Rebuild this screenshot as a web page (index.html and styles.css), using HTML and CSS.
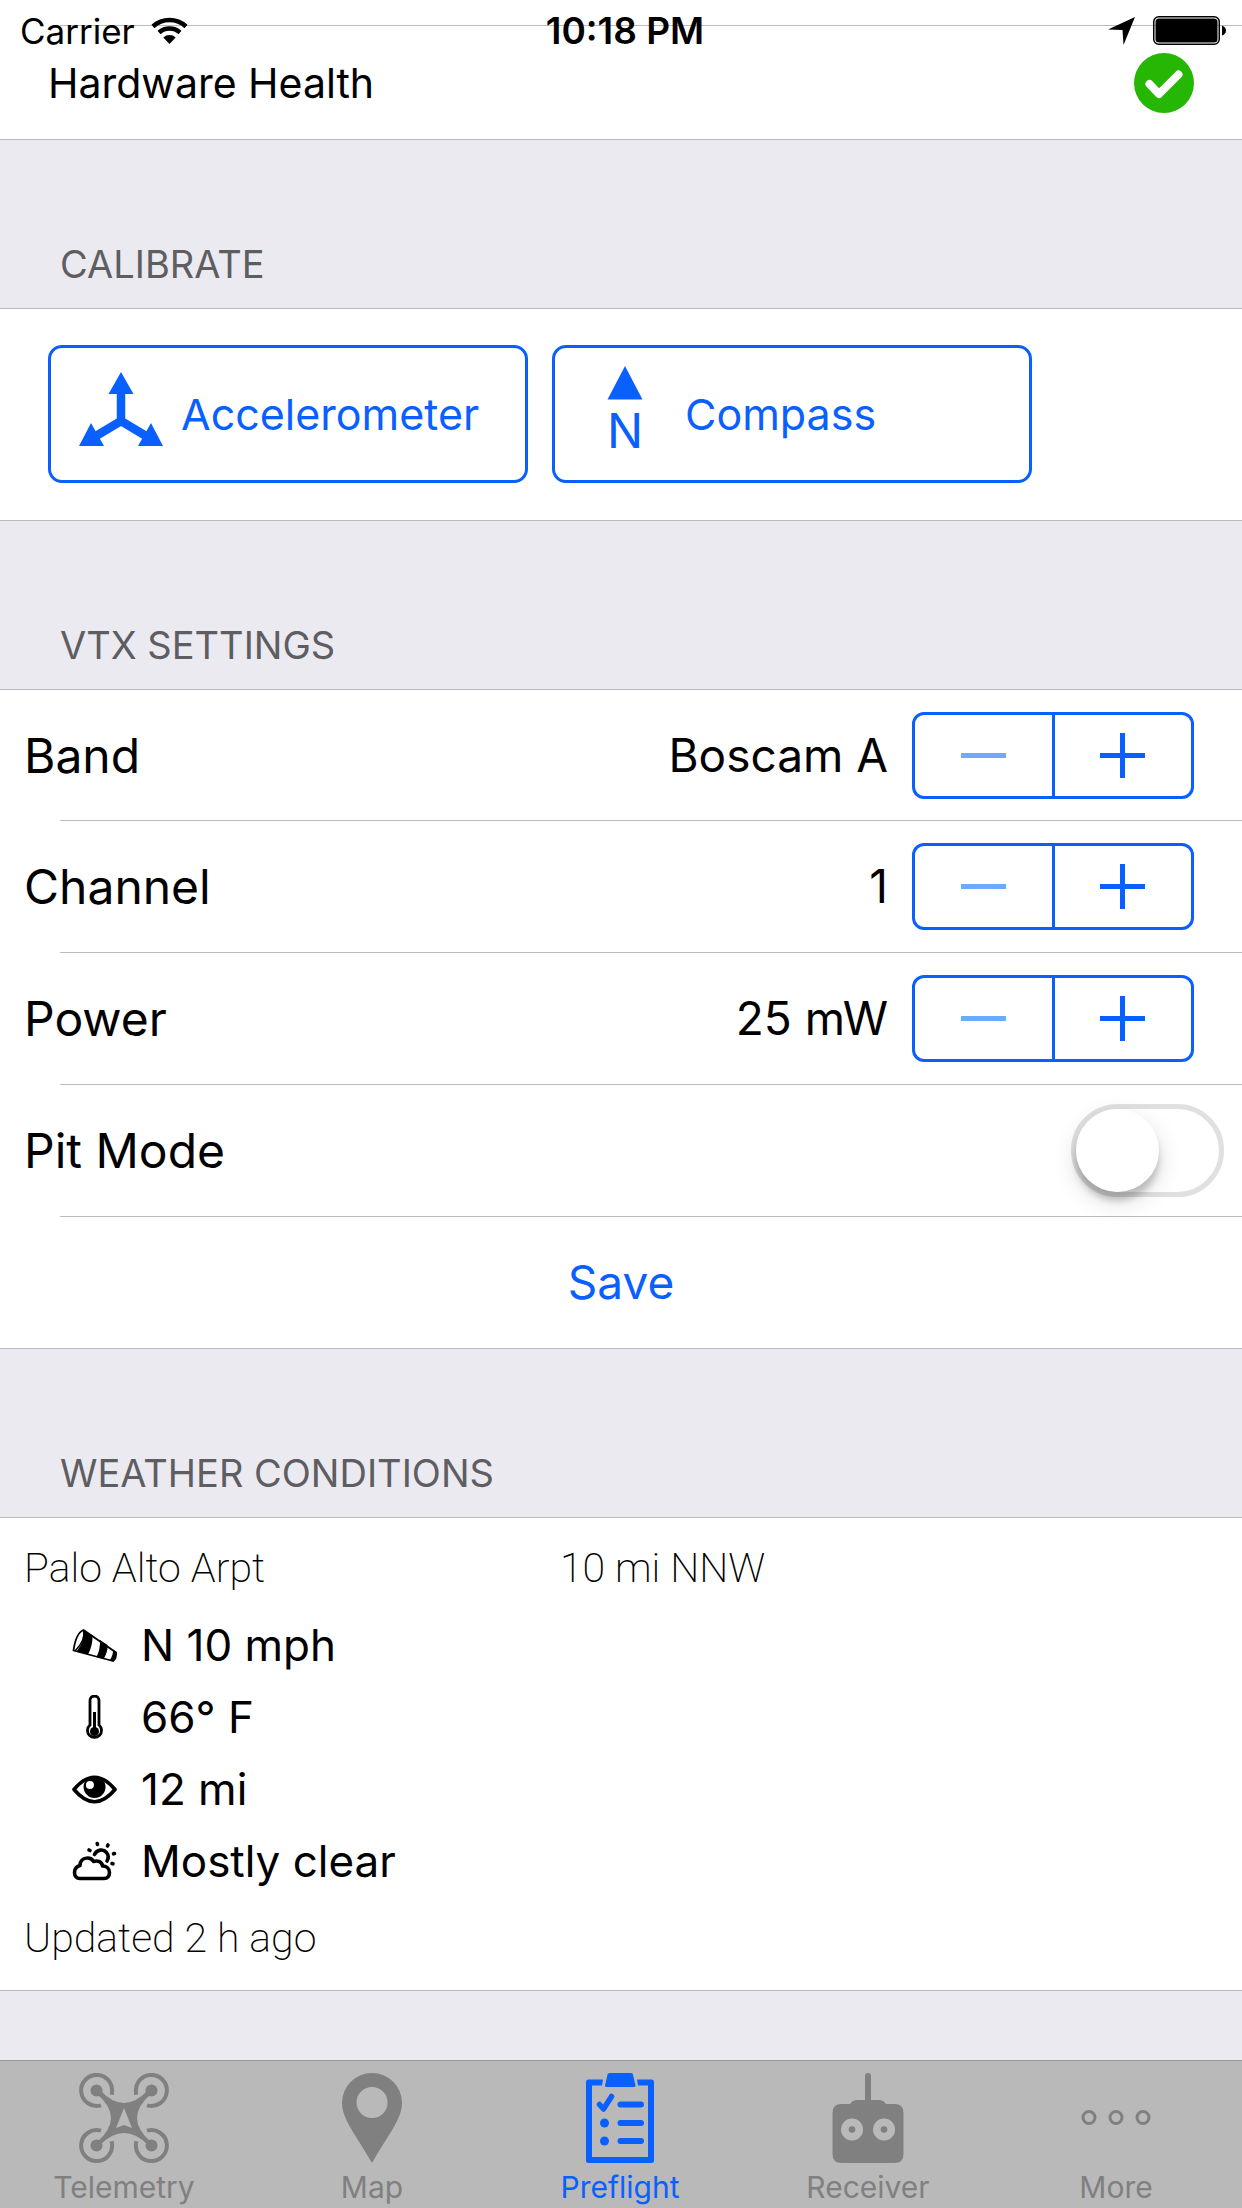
FILE: index.html
```html
<!DOCTYPE html>
<html lang="en">
<head>
<meta charset="utf-8">
<meta name="viewport" content="width=device-width, initial-scale=1">
<title>Preflight</title>
<link rel="stylesheet" href="styles.css">
</head>
<body>
<header class="status-bar">
  <div class="status-left">
    <span>Carrier</span>
    <svg class="wifi" viewBox="0 0 37 27" aria-hidden="true">
      <path d="M2 9.500A24.500 24.500 0 0 1 35 9.500M8 15.500A16 16 0 0 1 29 15.500" fill="none" stroke="currentColor" stroke-width="4.500"/>
      <path d="M12.300 20.500A9 9 0 0 1 24.700 20.500L18.500 27z"/>
    </svg>
  </div>
  <time class="status-time">10:18 PM</time>
  <div class="status-right">
    <svg class="location" viewBox="0 0 27 28" aria-hidden="true"><path d="M27 0L15.500 28L14.500 13L0 12.500z"/></svg>
    <svg class="battery" viewBox="0 0 73 29" aria-hidden="true">
      <rect x=".75" y=".75" width="65.500" height="27.500" rx="5" fill="none" stroke="currentColor" stroke-width="1.500"/>
      <rect x="2.500" y="2.500" width="62" height="24" rx="3.500"/>
      <path d="M69 9.500Q73 11 73 14.500T69 19.500z"/>
    </svg>
  </div>
</header>

<main class="content">
  <section class="health">
    <div class="health-row">
      <h2 class="health-title">Hardware Health</h2>
      <svg class="health-badge" viewBox="0 0 60 60" role="img" aria-label="Healthy">
        <circle cx="30" cy="30" r="30" fill="#25b703"/>
        <path d="M15.500 31L25 41L44.500 21.500" fill="none" stroke="#fff" stroke-width="8" stroke-linecap="round" stroke-linejoin="round"/>
      </svg>
    </div>
  </section>

  <section>
    <h2 class="section-title">CALIBRATE</h2>
    <div class="group calibrate">
      <button class="tile" type="button">
        <svg class="tile-icon" viewBox="0 1 84 96" aria-hidden="true">
          <path d="M42 17V56M42 56L17 71M42 56L67 71" fill="none" stroke="currentColor" stroke-width="8.500"/>
          <path d="M42 7L54.500 29H29.500zM0 81L12 58L25 81zM84 81L72 58L59 81z"/>
        </svg>
        <span>Accelerometer</span>
      </button>
      <button class="tile" type="button">
        <svg class="tile-icon" viewBox="0 1 84 96" aria-hidden="true">
          <path d="M42 1L59.500 34.500H24.500z"/>
          <text class="tile-glyph" x="42" y="83" text-anchor="middle">N</text>
        </svg>
        <span>Compass</span>
      </button>
    </div>
  </section>

  <section>
    <h2 class="section-title">VTX SETTINGS</h2>
    <div class="group">
      <div class="row">
        <span class="row-label" id="band">Band</span>
        <output class="row-value">Boscam A</output>
        <div class="stepper" role="group" aria-labelledby="band">
          <button class="step minus" type="button" aria-label="Decrease" disabled></button>
          <button class="step plus" type="button" aria-label="Increase"></button>
        </div>
      </div>
      <div class="row">
        <span class="row-label" id="channel">Channel</span>
        <output class="row-value">1</output>
        <div class="stepper" role="group" aria-labelledby="channel">
          <button class="step minus" type="button" aria-label="Decrease" disabled></button>
          <button class="step plus" type="button" aria-label="Increase"></button>
        </div>
      </div>
      <div class="row">
        <span class="row-label" id="power">Power</span>
        <output class="row-value">25 mW</output>
        <div class="stepper" role="group" aria-labelledby="power">
          <button class="step minus" type="button" aria-label="Decrease" disabled></button>
          <button class="step plus" type="button" aria-label="Increase"></button>
        </div>
      </div>
      <div class="row row-switch">
        <label class="row-label" for="pit">Pit Mode</label>
        <input class="switch" id="pit" type="checkbox" role="switch">
      </div>
      <div class="row">
        <button class="save" type="button">Save</button>
      </div>
    </div>
  </section>

  <section>
    <h2 class="section-title">WEATHER CONDITIONS</h2>
    <div class="group weather">
      <div class="station">
        <span>Palo Alto Arpt</span>
        <span>10 mi NNW</span>
      </div>
      <ul class="readings">
        <li>
          <svg class="reading-icon" viewBox="0 0 45 45" aria-hidden="true">
            <path d="M11.500 7Q4 10 1.500 27.500L41 38Q44.500 35.500 44 29.500z" fill="none" stroke="currentColor" stroke-width="1.800" stroke-linejoin="round"/>
            <path d="M11.500 7Q13.500 18 4.500 28.500L16 31.500Q21 22 20.500 12.500zM28 17L35.500 22Q36 29 31.500 36L24.500 34Q28.500 26 28 17zM41 26.500L44.500 29Q44.500 36 41 38.500L37.500 37.500Q41.500 32 41 26.500z"/>
            <path d="M11.500 7.500Q14 17 3 28" fill="none" stroke="currentColor" stroke-width="1.500"/>
          </svg>
          N 10 mph
        </li>
        <li>
          <svg class="reading-icon" viewBox="0 0 45 45" aria-hidden="true">
            <path d="M18 30V5.500a4.500 4.500 0 0 1 9 0V30a7 7 0 1 1-9 0z" fill="none" stroke="currentColor" stroke-width="2.800"/>
            <circle cx="22.500" cy="36.500" r="4.500"/>
            <path d="M21 17h3v18h-3z"/>
          </svg>
          66° F
        </li>
        <li>
          <svg class="reading-icon" viewBox="0 0 45 45" aria-hidden="true">
            <path d="M2 22.500Q22.500-2 43 22.500Q22.500 47 2 22.500z" fill="none" stroke="currentColor" stroke-width="3.600" stroke-linejoin="round"/>
            <path fill-rule="evenodd" d="M22.500 9a11 11 0 1 0 .1 22a11 11 0 1 0-.1-22zM18 14a4 4 0 1 1-.1 8a4 4 0 1 1 .1-8z"/>
          </svg>
          12 mi
        </li>
        <li>
          <svg class="reading-icon" viewBox="0 0 45 45" aria-hidden="true" fill="none" stroke="currentColor" stroke-width="3.600" stroke-linecap="round" stroke-linejoin="round">
            <path d="M8 39.500C4.500 39.500 2.500 37 2.500 33.500C2.500 30 4.500 27.500 8 26.500C8 22 11 19 15.500 19C18.500 19 20.500 20.500 21.500 22.500C26 21 30 23 30.500 27C34.500 27 37.500 29.500 37.500 33.500C37.500 37 35.500 39.500 32 39.500z"/>
            <path d="M22.500 15.500C25 10.500 31 9.500 34.500 13.500C36.500 16 36.500 19.500 35 22" />
            <path d="M25.200 4.500l.3 1M36 6l-.5 1M17 11l1 .5M42.500 14.500l-1 .3M40 24.500l1 .3"/>
          </svg>
          Mostly clear
        </li>
      </ul>
      <p class="updated">Updated 2 h ago</p>
    </div>
  </section>
</main>

<nav class="tab-bar" aria-label="Main">
  <a class="tab" href="#telemetry">
    <svg class="tab-icon" viewBox="0 0 90 90" aria-hidden="true">
      <g fill="none" stroke="currentColor" stroke-width="4">
        <path d="M32.500 21.800A15.500 15.500 0 1 0 22 32.300"/>
        <path d="M57.500 21.800A15.500 15.500 0 1 1 68 32.300M32.500 68.200A15.500 15.500 0 1 1 22 57.700M57.500 68.200A15.500 15.500 0 1 0 68 57.700"/>
      </g>
      <circle cx="17.500" cy="17.500" r="6"/><circle cx="72.500" cy="17.500" r="6"/><circle cx="17.500" cy="72.500" r="6"/><circle cx="72.500" cy="72.500" r="6"/>
      <path fill-rule="evenodd" d="M21 17Q45 43 69 17L72 21Q44 45 72 69L69 72Q45 48 21 72L18 69Q46 45 18 21zM45 35L37 55L45 52L53 55z"/>
    </svg>
    <span>Telemetry</span>
  </a>
  <a class="tab" href="#map">
    <svg class="tab-icon" viewBox="0 0 90 90" aria-hidden="true">
      <path fill-rule="evenodd" d="M45 90C29 62 15 46 15 30A30 30 0 0 1 75 30C75 46 61 62 45 90zM45 14a15.500 15.500 0 1 0 .1 31a15.500 15.500 0 1 0-.1-31z"/>
    </svg>
    <span>Map</span>
  </a>
  <a class="tab active" href="#preflight" aria-current="page">
    <svg class="tab-icon" viewBox="0 0 90 90" aria-hidden="true">
      <path d="M28 6.500L27 12.500H17V84H73V12.500H63L62 6.500H76.500Q79 6.500 79 9V87.500Q79 90 76.500 90H13.500Q11 90 11 87.500V9Q11 6.500 13.500 6.500z"/>
      <path d="M32.500 1.500Q33 0 34.500 0H56Q57.500 0 58 1.500L60.500 12.500Q60.500 14 59 14H31.500Q30 14 30 12.500z"/>
      <g fill="none" stroke="currentColor" stroke-width="6" stroke-linecap="round" stroke-linejoin="round">
        <path d="M24.500 31.500L28.500 36L36.500 23.500" stroke-width="5.500"/>
        <path d="M45.500 31.500H66M45.500 50H66M45.500 68H66"/>
      </g>
      <circle cx="29.500" cy="50" r="4.500"/><circle cx="29.500" cy="68" r="4.500"/>
    </svg>
    <span>Preflight</span>
  </a>
  <a class="tab" href="#receiver">
    <svg class="tab-icon" viewBox="0 0 90 90" aria-hidden="true">
      <path fill-rule="evenodd" d="M42 3a3 3 0 0 1 6 0V27H56Q60 27 63 31H71.500Q80.500 31 80.500 40V81Q80.500 90 71.500 90H18.500Q9.500 90 9.500 81V40Q9.500 31 18.500 31H27Q30 27 34 27H42zM29 45.500a11 11 0 1 0 .1 22a11 11 0 1 0-.1-22zM61 45.500a11 11 0 1 0 .1 22a11 11 0 1 0-.1-22z"/>
      <circle cx="29" cy="56.500" r="3.300"/><circle cx="61" cy="56.500" r="3.300"/>
    </svg>
    <span>Receiver</span>
  </a>
  <a class="tab" href="#more">
    <svg class="tab-icon" viewBox="0 0 90 90" aria-hidden="true" fill="none" stroke="currentColor" stroke-width="3">
      <circle cx="18" cy="44.500" r="6"/><circle cx="45" cy="44.500" r="6"/><circle cx="72" cy="44.500" r="6"/>
    </svg>
    <span>More</span>
  </a>
</nav>
</body>
</html>
```
FILE: styles.css
```css
:root {
  --tint: #0a60ff;
  --tint-disabled: #6ca9ff;
  --line: #bbbabf;
  --backdrop: #ebeaf0;
  --muted: #5e5d62;
  --tab: #808080;
}

* {
  box-sizing: border-box;
}

body {
  margin: 0;
  min-height: 100vh;
  display: flex;
  flex-direction: column;
  background: var(--backdrop);
  color: #000;
  font-family: Inter, "Liberation Sans", sans-serif;
}

h2,
p,
ul {
  margin: 0;
  padding: 0;
  font-weight: 400;
}

button {
  margin: 0;
  padding: 0;
  border: 0;
  background: none;
  color: var(--tint);
  font: inherit;
}

svg {
  flex: none;
  fill: currentColor;
}

svg[fill="none"] {
  fill: none;
}

/* Status bar floats over the scrolled list */
.status-bar {
  position: absolute;
  top: 0;
  left: 0;
  right: 0;
  display: grid;
  grid-template-columns: 1fr auto 1fr;
  align-items: center;
  height: 61px;
  padding: 0 16px 0 20px;
  font-size: 35px;
}

.status-left,
.status-right {
  display: flex;
  align-items: center;
}

.status-left {
  gap: 16px;
}

.status-right {
  justify-content: flex-end;
  gap: 18px;
}

.status-time {
  padding-left: 4px;
  font-size: 37px;
  font-weight: 600;
}

.wifi {
  width: 37px;
  height: 27px;
}

.location {
  width: 27px;
  height: 28px;
}

.battery {
  width: 73px;
  height: 29px;
}

.content {
  flex: 1;
}

.health {
  padding-top: 25px;
  background: #fff;
  border-bottom: 1px solid var(--line);
}

.health-row,
.row {
  display: flex;
  align-items: center;
  background: linear-gradient(var(--line), var(--line)) 60px 0 / 100% 1px no-repeat;
}

.health-row {
  justify-content: space-between;
  min-height: 114px;
  padding: 2px 48px 0;
}

.health-title {
  font-size: 41px;
}

.health-badge {
  width: 60px;
  height: 60px;
}

.section-title {
  display: flex;
  align-items: flex-end;
  min-height: 168px;
  padding: 0 60px 20px;
  color: var(--muted);
  font-size: 38px;
  line-height: 48px;
}

.group {
  background: #fff;
  border-top: 1px solid var(--line);
  border-bottom: 1px solid var(--line);
}

.calibrate {
  display: flex;
  gap: 24px;
  padding: 36px 48px 37px;
}

.tile {
  flex: 0 1 480px;
  display: flex;
  align-items: center;
  gap: 18px;
  height: 138px;
  padding: 0 28px;
  border: 3px solid var(--tint);
  border-radius: 14px;
  font-size: 43px;
}

.tile-icon {
  width: 84px;
  height: 96px;
}

.tile-glyph {
  font-size: 48px;
}

.row {
  min-height: 132px;
  padding: 0 48px 0 24px;
  font-size: 48px;
}

.row:first-child {
  min-height: 130px;
  background: none;
}

.row-switch {
  padding-right: 18px;
}

.row-label {
  flex: 1;
}

.row-value {
  margin-right: 24px;
  font-size: 46px;
}

.stepper {
  display: flex;
  width: 282px;
  height: 87px;
  border: 3px solid var(--tint);
  border-radius: 12px;
}

/* Glyphs are bars centred in each half */
.step {
  flex: 1;
  --h: linear-gradient(currentColor, currentColor) center / 45px 5px no-repeat;
  --v: linear-gradient(currentColor, currentColor) center / 5px 45px no-repeat;
}

.minus {
  background: var(--h);
  color: var(--tint-disabled);
}

.plus {
  border-left: 3px solid var(--tint);
  background: var(--h), var(--v);
}

.switch {
  appearance: none;
  display: flex;
  width: 153px;
  height: 93px;
  margin: 0;
  border: 5px solid #e0e0e0;
  border-radius: 47px;
  background: #fff;
}

.switch::before {
  content: "";
  width: 83px;
  height: 83px;
  border-radius: 50%;
  background: #fff;
  box-shadow: 0 9px 24px rgba(0, 0, 0, 0.15), 0 9px 6px rgba(0, 0, 0, 0.18);
}

.switch:checked {
  justify-content: flex-end;
  border-color: var(--tint);
  background: var(--tint);
}

.save {
  flex: 1;
  height: 100px;
  margin-left: 24px;
  font-size: 46px;
}

.weather {
  padding: 24px 24px 26px;
  font-size: 44px;
}

.station,
.updated {
  font-family: Roboto, Inter, sans-serif;
  font-size: 41px;
  font-weight: 200;
  line-height: 52px;
}

.station {
  display: grid;
  grid-template-columns: 536px 1fr;
}

.readings {
  display: grid;
  grid-auto-rows: 72px;
  padding: 15px 48px;
  list-style: none;
}

.readings li {
  display: flex;
  align-items: center;
  gap: 24px;
}

.reading-icon {
  width: 45px;
  height: 45px;
}

.tab-bar {
  display: flex;
  height: 148px;
  padding-right: 2px;
  border-top: 1px solid #98979c;
  background: #b9b9b9;
}

.tab {
  flex: 1;
  display: flex;
  flex-direction: column;
  align-items: center;
  gap: 6px;
  padding-top: 12px;
  color: var(--tab);
  font-size: 30px;
  line-height: 36px;
  text-decoration: none;
}

.tab.active {
  color: var(--tint);
}

.tab-icon {
  width: 90px;
  height: 90px;
}
```
